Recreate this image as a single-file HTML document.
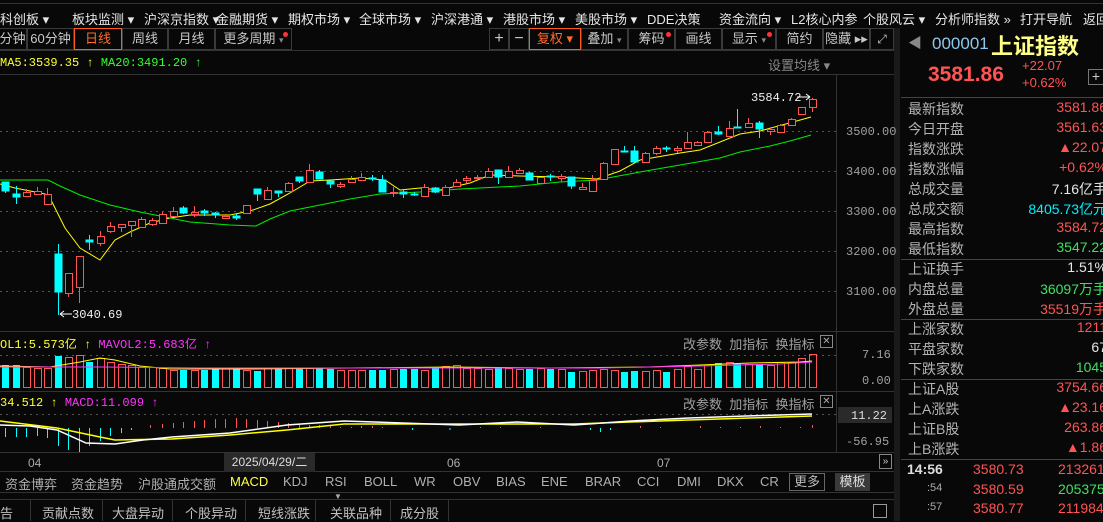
<!DOCTYPE html>
<html><head><meta charset="utf-8"><style>
*{margin:0;padding:0;box-sizing:border-box}
body{width:1103px;height:521px;background:#080808;overflow:hidden;position:relative;font-family:"Liberation Sans","Noto Sans CJK SC",sans-serif;color:#ccc}
.a{position:absolute;white-space:nowrap}
.menu{font-size:13px;color:#e6e6e6;top:9px}
.tab{position:absolute;top:28px;height:22px;border:1px solid #3a3a3a;font-size:13px;color:#c8c8c8;text-align:center;line-height:20px}
.mono{font-family:"Liberation Mono","DejaVu Sans Mono",monospace}
.rl{position:absolute;left:908px;font-size:14px;color:#b4b4b4;font-family:"Liberation Sans","Noto Sans CJK SC",sans-serif}
.rv{position:absolute;right:4px;font-size:14px;text-align:right;font-family:"Liberation Sans","Noto Sans CJK SC",sans-serif}
.red{color:#ff5454}.grn{color:#3ee060}.cy{color:#00f0ff}.wh{color:#e6e6e6}
.it{position:absolute;top:474px;font-size:13px;color:#b0b0b0}
.bt{position:absolute;top:503px;font-size:13px;color:#c0c0c0}
</style></head><body>
<div class="a" style="left:0;top:3px;width:1103px;height:1px;background:#333"></div>
<div class="a menu" style="left:0">科创板 ▾</div>
<div class="a menu" style="left:72px">板块监测 ▾</div>
<div class="a menu" style="left:144px">沪深京指数 ▾</div>
<div class="a menu" style="left:216px">金融期货 ▾</div>
<div class="a menu" style="left:288px">期权市场 ▾</div>
<div class="a menu" style="left:359px">全球市场 ▾</div>
<div class="a menu" style="left:431px">沪深港通 ▾</div>
<div class="a menu" style="left:503px">港股市场 ▾</div>
<div class="a menu" style="left:575px">美股市场 ▾</div>
<div class="a menu" style="left:647px">DDE决策</div>
<div class="a menu" style="left:719px">资金流向 ▾</div>
<div class="a menu" style="left:791px">L2核心内参</div>
<div class="a menu" style="left:863px">个股风云 ▾</div>
<div class="a menu" style="left:935px">分析师指数 »</div>
<div class="a menu" style="left:1020px">打开导航</div>
<div class="a menu" style="left:1083px">返回</div>

<div class="tab" style="left:-2px;width:29px">分钟</div>
<div class="tab" style="left:27px;width:47px">60分钟</div>
<div class="tab" style="left:74px;width:48px;border-color:#ff5a1e;color:#ff6a2a">日线</div>
<div class="tab" style="left:122px;width:46px">周线</div>
<div class="tab" style="left:168px;width:47px">月线</div>
<div class="tab" style="left:215px;width:77px">更多周期 <span style="font-size:9px;color:#888">▾</span><span style="position:absolute;right:3px;top:3px;width:5px;height:5px;border-radius:50%;background:#ff3333"></span></div>
<div class="tab" style="left:489px;width:20px;font-size:16px">+</div>
<div class="tab" style="left:509px;width:20px;font-size:16px">−</div>
<div class="tab" style="left:529px;width:52px;border-color:#ff5a1e;color:#ff6a2a">复权 ▾</div>
<div class="tab" style="left:581px;width:47px">叠加 <span style="font-size:9px;color:#888">▾</span></div>
<div class="tab" style="left:628px;width:47px">筹码<span style="position:absolute;right:3px;top:3px;width:5px;height:5px;border-radius:50%;background:#ff3333"></span></div>
<div class="tab" style="left:675px;width:47px">画线</div>
<div class="tab" style="left:722px;width:54px">显示 <span style="font-size:9px;color:#888">▾</span><span style="position:absolute;right:3px;top:3px;width:5px;height:5px;border-radius:50%;background:#ff3333"></span></div>
<div class="tab" style="left:776px;width:47px">简约</div>
<div class="tab" style="left:823px;width:47px">隐藏 ▸▸</div>
<div class="tab" style="left:870px;width:24px;font-size:12px">⤢</div>

<div class="a mono" style="left:0;top:56px;font-size:12px;color:#ffff33">MA5:3539.35 ↑ <span style="color:#33ff33">MA20:3491.20 ↑</span></div>
<div class="a" style="left:768px;top:55px;font-size:13px;color:#888">设置均线 ▾</div>

<svg class="a" style="left:0;top:0" width="900" height="521">
<g stroke="#555" stroke-dasharray="2,4" stroke-width="1">
<line x1="0" x2="836" y1="131.5" y2="131.5"/><line x1="0" x2="836" y1="171.5" y2="171.5"/><line x1="0" x2="836" y1="211.5" y2="211.5"/><line x1="0" x2="836" y1="251.5" y2="251.5"/><line x1="0" x2="836" y1="291.5" y2="291.5"/>
<line x1="0" x2="836" y1="355.5" y2="355.5"/><line x1="0" x2="836" y1="414.5" y2="414.5"/>
</g>
<g stroke="#333"><line x1="0" x2="900" y1="50.5" y2="50.5"/><line x1="0" x2="900" y1="74.5" y2="74.5"/><line x1="836.5" x2="836.5" y1="75" y2="452"/><line x1="0" x2="900" y1="331.5" y2="331.5"/><line x1="0" x2="900" y1="391.5" y2="391.5"/><line x1="0" x2="900" y1="452.5" y2="452.5"/><line x1="0" x2="900" y1="471.5" y2="471.5"/><line x1="0" x2="900" y1="492.5" y2="492.5"/><line x1="0" x2="900" y1="499.5" y2="499.5"/></g>
<rect x="894" y="28" width="7" height="493" fill="#1a1a1a"/>
<g fill="#a0a0a0" font-family="Liberation Mono,monospace" font-size="12">
<text x="846" y="135">3500.00</text><text x="846" y="175">3400.00</text><text x="846" y="215">3300.00</text><text x="846" y="255">3200.00</text><text x="846" y="295">3100.00</text>
<text x="862" y="358">7.16</text><text x="862" y="384">0.00</text>
<rect x="838" y="407" width="54" height="16" fill="#2a2a2a"/><text x="851" y="419" fill="#ddd">11.22</text><text x="846" y="445">-56.95</text>
</g>
<polyline fill="none" stroke="#ffff00" stroke-width="1" points="0,184 15,188 45,194 50,198 65,228 80,248 100,260 115,240 130,232 150,223 170,218 190,215 230,215 250,211 270,204 290,193 310,181 330,180 360,178 385,180 400,190 420,188 440,190 470,183 490,175 520,176 560,177 597,179 620,171 640,160 680,153 700,150 740,134 760,131 793,122 811,117"/>
<polyline fill="none" stroke="#00ee00" stroke-width="1" points="0,180 48,180 60,186 80,195 110,205 140,212 160,216 190,222 230,225 256,226 270,219 290,211 320,205 350,199 380,194 420,192 460,189 480,188 520,186 560,182 597,180 640,172 680,165 720,158 740,152 770,146 790,141 811,135"/>
<g stroke="#ff5454" fill="#080808" stroke-width="1">
<path d="M26.5 189V196M37.5 187V194M47.5 188V204M68.5 273V297M79.5 256V303M100.5 231V246M110.5 222V233M121.5 224V232M131.5 221V237M141.5 217V227M152.5 218V226M162.5 212V223M173.5 207V216M194.5 206V217M225.5 214V219M246.5 205V213M267.5 187V199M288.5 182V191M309.5 164V182M340.5 182V188M351.5 176V182M361.5 173V180M393.5 187V197M424.5 184V196M445.5 185V195M456.5 179V186M466.5 176V183M477.5 175V178M488.5 168V177M508.5 166V177M519.5 168V174M540.5 177V183M561.5 174V182M582.5 183V189M592.5 175V191M603.5 162V179M614.5 149V164M645.5 152V162M656.5 146V155M677.5 146V153M687.5 132V148M697.5 141V146M707.5 131V142M729.5 121V136M748.5 118V127M770.5 127V135M780.5 124V132M791.5 118V125M801.5 107V114M812.5 98V112"/>
<rect x="23.5" y="192.5" width="7" height="4"/><rect x="34.5" y="191.5" width="7" height="3"/><rect x="44.5" y="194.5" width="7" height="10"/><rect x="65.5" y="273.5" width="7" height="20"/><rect x="76.5" y="256.5" width="7" height="31"/><rect x="97.5" y="236.5" width="7" height="7"/><rect x="107.5" y="226.5" width="7" height="5"/><rect x="118.5" y="224.5" width="7" height="3"/><rect x="128.5" y="221.5" width="7" height="4"/><rect x="138.5" y="219.5" width="7" height="8"/><rect x="149.5" y="220.5" width="7" height="4"/><rect x="159.5" y="214.5" width="7" height="9"/><rect x="170.5" y="211.5" width="7" height="5"/><rect x="191.5" y="212.5" width="7" height="2"/><rect x="222.5" y="216.5" width="7" height="2"/><rect x="243.5" y="205.5" width="7" height="8"/><rect x="264.5" y="190.5" width="7" height="9"/><rect x="285.5" y="183.5" width="7" height="8"/><rect x="306.5" y="170.5" width="7" height="12"/><rect x="337.5" y="184.5" width="7" height="2"/><rect x="348.5" y="179.5" width="7" height="3"/><rect x="358.5" y="177.5" width="7" height="3"/><rect x="390.5" y="192.5" width="7" height="1"/><rect x="421.5" y="187.5" width="7" height="9"/><rect x="442.5" y="187.5" width="7" height="8"/><rect x="453.5" y="182.5" width="7" height="4"/><rect x="463.5" y="178.5" width="7" height="2"/><rect x="474.5" y="177.5" width="7" height="1"/><rect x="485.5" y="171.5" width="7" height="6"/><rect x="505.5" y="171.5" width="7" height="6"/><rect x="516.5" y="170.5" width="7" height="3"/><rect x="537.5" y="177.5" width="7" height="6"/><rect x="558.5" y="176.5" width="7" height="2"/><rect x="579.5" y="187.5" width="7" height="2"/><rect x="589.5" y="180.5" width="7" height="11"/><rect x="600.5" y="163.5" width="7" height="16"/><rect x="611.5" y="149.5" width="7" height="15"/><rect x="642.5" y="153.5" width="7" height="9"/><rect x="653.5" y="148.5" width="7" height="5"/><rect x="674.5" y="148.5" width="7" height="2"/><rect x="684.5" y="142.5" width="7" height="6"/><rect x="694.5" y="142.5" width="7" height="3"/><rect x="704.5" y="132.5" width="7" height="10"/><rect x="726.5" y="128.5" width="7" height="8"/><rect x="745.5" y="123.5" width="7" height="4"/><rect x="767.5" y="129.5" width="7" height="2"/><rect x="777.5" y="125.5" width="7" height="7"/><rect x="788.5" y="119.5" width="7" height="6"/><rect x="798.5" y="107.5" width="7" height="7"/><rect x="809.5" y="99.5" width="7" height="8"/>
</g>
<g stroke="#00ffff" fill="#00ffff">
<path d="M5.5 182V193M16.5 186V204M58.5 244V315M89.5 235V250M183.5 206V214M204.5 209V216M215.5 212V218M236.5 214V220M257.5 189V201M278.5 191V197M299.5 177V183M319.5 170V179M330.5 181V188M372.5 175V181M382.5 175V192M403.5 190V198M414.5 192V196M435.5 187V193M498.5 170V184M529.5 172V180M550.5 174V181M571.5 177V189M624.5 146V152M634.5 146V162M666.5 146V152M718.5 126V135M737.5 109V128M759.5 121V138"/>
<rect x="2" y="182" width="7" height="9"/><rect x="13" y="194" width="7" height="3"/><rect x="55" y="254" width="7" height="38"/><rect x="86" y="240" width="7" height="2"/><rect x="180" y="208" width="7" height="5"/><rect x="201" y="211" width="7" height="2"/><rect x="212" y="213" width="7" height="2"/><rect x="233" y="216" width="7" height="2"/><rect x="254" y="189" width="7" height="5"/><rect x="275" y="191" width="7" height="2"/><rect x="296" y="177" width="7" height="4"/><rect x="316" y="172" width="7" height="7"/><rect x="327" y="181" width="7" height="3"/><rect x="369" y="178" width="7" height="1"/><rect x="379" y="180" width="7" height="12"/><rect x="400" y="192" width="7" height="2"/><rect x="411" y="194" width="7" height="1"/><rect x="432" y="188" width="7" height="4"/><rect x="495" y="170" width="7" height="7"/><rect x="526" y="173" width="7" height="7"/><rect x="547" y="176" width="7" height="1"/><rect x="568" y="177" width="7" height="9"/><rect x="621" y="151" width="7" height="1"/><rect x="631" y="151" width="7" height="11"/><rect x="663" y="148" width="7" height="1"/><rect x="715" y="132" width="7" height="2"/><rect x="734" y="127" width="7" height="1"/><rect x="756" y="123" width="7" height="6"/>
</g>
<g fill="#f0f0f0" font-family="Liberation Mono,monospace" font-size="12">
<text x="72" y="318">3040.69</text><path d="M60 314H72M60 314l4-3M60 314l4 3" stroke="#fff" fill="none"/>
<text x="751" y="101">3584.72</text><path d="M797 97H810M810 97l-4-3M810 97l-4 3" stroke="#fff" fill="none"/>
</g>
<g stroke="#ff5454" fill="none">
<rect x="23.5" y="367.5" width="7" height="20"/><rect x="34.5" y="368.5" width="7" height="19"/><rect x="44.5" y="368.5" width="7" height="19"/><rect x="65.5" y="357.5" width="7" height="30"/><rect x="76.5" y="355.5" width="7" height="32"/><rect x="97.5" y="358.5" width="7" height="29"/><rect x="107.5" y="362.5" width="7" height="25"/><rect x="118.5" y="364.5" width="7" height="23"/><rect x="128.5" y="365.5" width="7" height="22"/><rect x="138.5" y="367.5" width="7" height="20"/><rect x="149.5" y="367.5" width="7" height="20"/><rect x="159.5" y="368.5" width="7" height="19"/><rect x="170.5" y="370.5" width="7" height="17"/><rect x="191.5" y="370.5" width="7" height="17"/><rect x="222.5" y="368.5" width="7" height="19"/><rect x="243.5" y="370.5" width="7" height="17"/><rect x="264.5" y="368.5" width="7" height="19"/><rect x="285.5" y="368.5" width="7" height="19"/><rect x="306.5" y="368.5" width="7" height="19"/><rect x="337.5" y="370.5" width="7" height="17"/><rect x="348.5" y="370.5" width="7" height="17"/><rect x="358.5" y="370.5" width="7" height="17"/><rect x="390.5" y="369.5" width="7" height="18"/><rect x="421.5" y="370.5" width="7" height="17"/><rect x="442.5" y="366.5" width="7" height="21"/><rect x="453.5" y="365.5" width="7" height="22"/><rect x="463.5" y="368.5" width="7" height="19"/><rect x="474.5" y="368.5" width="7" height="19"/><rect x="485.5" y="369.5" width="7" height="18"/><rect x="505.5" y="368.5" width="7" height="19"/><rect x="516.5" y="369.5" width="7" height="18"/><rect x="537.5" y="368.5" width="7" height="19"/><rect x="558.5" y="369.5" width="7" height="18"/><rect x="579.5" y="371.5" width="7" height="16"/><rect x="589.5" y="370.5" width="7" height="17"/><rect x="600.5" y="369.5" width="7" height="18"/><rect x="611.5" y="370.5" width="7" height="17"/><rect x="642.5" y="371.5" width="7" height="16"/><rect x="653.5" y="370.5" width="7" height="17"/><rect x="674.5" y="369.5" width="7" height="18"/><rect x="684.5" y="366.5" width="7" height="21"/><rect x="694.5" y="369.5" width="7" height="18"/><rect x="704.5" y="365.5" width="7" height="22"/><rect x="726.5" y="362.5" width="7" height="25"/><rect x="745.5" y="364.5" width="7" height="23"/><rect x="767.5" y="365.5" width="7" height="22"/><rect x="777.5" y="362.5" width="7" height="25"/><rect x="788.5" y="362.5" width="7" height="25"/><rect x="798.5" y="358.5" width="7" height="29"/><rect x="809.5" y="354.5" width="7" height="33"/>
</g>
<g fill="#00ffff">
<rect x="2" y="365" width="7" height="23"/><rect x="13" y="365" width="7" height="23"/><rect x="55" y="356" width="7" height="32"/><rect x="86" y="362" width="7" height="26"/><rect x="180" y="370" width="7" height="18"/><rect x="201" y="370" width="7" height="18"/><rect x="212" y="369" width="7" height="19"/><rect x="233" y="368" width="7" height="20"/><rect x="254" y="371" width="7" height="17"/><rect x="275" y="368" width="7" height="20"/><rect x="296" y="368" width="7" height="20"/><rect x="316" y="368" width="7" height="20"/><rect x="327" y="369" width="7" height="19"/><rect x="369" y="370" width="7" height="18"/><rect x="379" y="370" width="7" height="18"/><rect x="400" y="369" width="7" height="19"/><rect x="411" y="369" width="7" height="19"/><rect x="432" y="368" width="7" height="20"/><rect x="495" y="368" width="7" height="20"/><rect x="526" y="369" width="7" height="19"/><rect x="547" y="369" width="7" height="19"/><rect x="568" y="372" width="7" height="16"/><rect x="621" y="372" width="7" height="16"/><rect x="631" y="371" width="7" height="17"/><rect x="663" y="372" width="7" height="16"/><rect x="715" y="363" width="7" height="25"/><rect x="734" y="364" width="7" height="24"/><rect x="756" y="364" width="7" height="24"/>
</g>
<polyline fill="none" stroke="#ffff00" points="0,366 50,367 80,362 100,358 115,360 140,366 170,369 250,369 350,368 450,367 550,368 650,367 700,365 750,363 800,362 812,361"/>
<polyline fill="none" stroke="#ff33ff" points="0,367 100,367 200,368 300,368 450,368 600,368 700,366 780,364 812,362"/>
<g stroke="#00ffff"><path d="M5.5 428V437M16.5 428V437M26.5 428V437M37.5 428V436M47.5 428V438M58.5 428V446M68.5 428V450M79.5 428V452M89.5 428V446M100.5 428V441M110.5 428V436M121.5 428V433M131.5 428V430M412.5 428V430M590.5 428V430M600.5 428V432M610.5 428V430M450 428V430"/></g>
<g stroke="#ff5454"><path d="M150.5 428V425M162.5 428V424M173.5 428V423M183.5 428V422M194.5 428V421M204.5 428V420M215.5 428V419M225.5 428V419M236.5 428V418M246.5 428V419M257.5 428V420M267.5 428V421M278.5 428V422M288.5 428V423M299.5 428V424M309.5 428V425M319.5 428V425M330.5 428V426M340.5 428V427M351.5 428V427M361.5 428V426M372.5 428V426M382.5 428V427M480.5 428V427M500.5 428V427M540.5 428V427M640.5 428V426M660.5 428V427M700.5 428V426M720.5 428V427M740.5 428V427M760.5 428V426M780.5 428V427M800.5 428V427M812.5 428V425"/></g>
<polyline fill="none" stroke="#ffff00" stroke-width="1.5" points="0,421 57,428 100,437 115,440 172,439 230,435 287,430 344,424 400,424 459,424 520,424 574,424 630,422 689,420 750,418 812,416"/>
<polyline fill="none" stroke="#ffffff" stroke-width="1.5" points="0,425 30,426 57,430 86,443 115,444 143,440 172,437 230,433 287,425 344,421 402,423 459,425 517,422 574,425 631,421 689,418 746,416 812,414"/>
</svg>

<div class="a mono" style="left:0;top:335px;font-size:12px;color:#ffff33">OL1:5.573亿 ↑ <span style="color:#ff33ff">MAVOL2:5.683亿 ↑</span></div>
<div class="a mono" style="left:0;top:396px;font-size:12px;color:#ffff33">34.512 ↑ <span style="color:#ff33ff">MACD:11.099 ↑</span></div>
<div class="a" style="left:683px;top:334px;font-size:13px;color:#a0a0a0">改参数 &nbsp;加指标 &nbsp;换指标</div>
<div class="a" style="left:820px;top:335px;width:13px;height:13px;border:1px solid #888;font-size:10px;line-height:11px;text-align:center;color:#aaa">✕</div>
<div class="a" style="left:683px;top:394px;font-size:13px;color:#a0a0a0">改参数 &nbsp;加指标 &nbsp;换指标</div>
<div class="a" style="left:820px;top:395px;width:13px;height:13px;border:1px solid #888;font-size:10px;line-height:11px;text-align:center;color:#aaa">✕</div>

<div class="a" style="left:28px;top:456px;font-size:12px;color:#aaa">04</div>
<div class="a" style="left:224px;top:453px;width:91px;height:19px;background:#2a2a2a;font-size:12px;color:#ddd;line-height:19px;text-align:center">2025/04/29/二</div>
<div class="a" style="left:447px;top:456px;font-size:12px;color:#aaa">06</div>
<div class="a" style="left:657px;top:456px;font-size:12px;color:#aaa">07</div>
<div class="a" style="left:879px;top:454px;width:13px;height:15px;border:1px solid #888;font-size:10px;color:#ccc;line-height:13px;text-align:center">»</div>

<div class="it" style="left:5px">资金博弈</div><div class="it" style="left:71px">资金趋势</div><div class="it" style="left:138px">沪股通成交额</div>
<div class="it" style="left:230px;color:#ffff44">MACD</div><div class="it" style="left:283px">KDJ</div><div class="it" style="left:325px">RSI</div><div class="it" style="left:364px">BOLL</div><div class="it" style="left:414px">WR</div><div class="it" style="left:453px">OBV</div><div class="it" style="left:496px">BIAS</div><div class="it" style="left:541px">ENE</div><div class="it" style="left:585px">BRAR</div><div class="it" style="left:637px">CCI</div><div class="it" style="left:677px">DMI</div><div class="it" style="left:717px">DKX</div><div class="it" style="left:760px">CR</div>
<div class="a" style="left:789px;top:473px;width:36px;height:18px;border:1px solid #666;font-size:13px;color:#bbb;text-align:center;line-height:16px">更多</div>
<div class="a" style="left:835px;top:473px;width:35px;height:18px;background:#3a3a3a;font-size:13px;color:#ddd;text-align:center;line-height:18px">模板</div>
<div class="a" style="left:334px;top:492px;font-size:8px;color:#aaa">▼</div>

<div class="bt" style="left:0">告</div><div class="bt" style="left:42px">贡献点数</div><div class="bt" style="left:112px">大盘异动</div><div class="bt" style="left:185px">个股异动</div><div class="bt" style="left:258px">短线涨跌</div><div class="bt" style="left:330px">关联品种</div><div class="bt" style="left:400px">成分股</div>
<div class="a" style="left:30px;top:500px;width:1px;height:21px;background:#333"></div><div class="a" style="left:102px;top:500px;width:1px;height:21px;background:#333"></div><div class="a" style="left:172px;top:500px;width:1px;height:21px;background:#333"></div><div class="a" style="left:245px;top:500px;width:1px;height:21px;background:#333"></div><div class="a" style="left:315px;top:500px;width:1px;height:21px;background:#333"></div><div class="a" style="left:390px;top:500px;width:1px;height:21px;background:#333"></div><div class="a" style="left:448px;top:500px;width:1px;height:21px;background:#333"></div>
<div class="a" style="left:873px;top:504px;width:14px;height:14px;border:1px solid #999"></div>

<div class="a" style="left:908px;top:33px;font-size:14px;color:#888">◀</div>
<div class="a" style="left:932px;top:34px;font-size:17px;color:#8cc8f0">000001</div>
<div class="a" style="left:991px;top:29px;font-size:22px;color:#ffff88;font-weight:bold">上证指数</div>
<div class="a" style="left:928px;top:63px;font-size:21px;color:#ff5454;font-weight:bold">3581.86</div>
<div class="a" style="left:1022px;top:58px;font-size:13px;color:#ff5454">+22.07</div>
<div class="a" style="left:1022px;top:75px;font-size:13px;color:#ff5454">+0.62%</div>
<div class="a" style="left:1088px;top:69px;width:16px;height:16px;border:1px solid #777;color:#ccc;font-size:14px;line-height:13px;text-align:center">+</div>
<div class="a" style="left:901px;top:97px;width:202px;height:1px;background:#444"></div>
<div class="a" style="left:901px;top:259px;width:202px;height:1px;background:#444"></div>
<div class="a" style="left:901px;top:319px;width:202px;height:1px;background:#444"></div>
<div class="a" style="left:901px;top:379px;width:202px;height:1px;background:#444"></div>
<div class="a" style="left:901px;top:459px;width:202px;height:1px;background:#444"></div>
<div style="position:absolute;left:0;top:0;width:1111px;height:521px">
<div class="rl" style="top:99px">最新指数</div><div class="rv red" style="top:99px">3581.86</div>
<div class="rl" style="top:119px">今日开盘</div><div class="rv red" style="top:119px">3561.63</div>
<div class="rl" style="top:139px">指数涨跌</div><div class="rv red" style="top:139px">▲22.07</div>
<div class="rl" style="top:159px">指数涨幅</div><div class="rv red" style="top:159px">+0.62%</div>
<div class="rl" style="top:179px">总成交量</div><div class="rv wh" style="top:179px">7.16亿手</div>
<div class="rl" style="top:199px">总成交额</div><div class="rv cy" style="top:199px">8405.73亿元</div>
<div class="rl" style="top:219px">最高指数</div><div class="rv red" style="top:219px">3584.72</div>
<div class="rl" style="top:239px">最低指数</div><div class="rv grn" style="top:239px">3547.22</div>
<div class="rl" style="top:259px">上证换手</div><div class="rv wh" style="top:259px">1.51%</div>
<div class="rl" style="top:279px">内盘总量</div><div class="rv grn" style="top:279px">36097万手</div>
<div class="rl" style="top:299px">外盘总量</div><div class="rv red" style="top:299px">35519万手</div>
<div class="rl" style="top:319px">上涨家数</div><div class="rv red" style="top:319px">1211</div>
<div class="rl" style="top:339px">平盘家数</div><div class="rv wh" style="top:339px">67</div>
<div class="rl" style="top:359px">下跌家数</div><div class="rv grn" style="top:359px">1045</div>
<div class="rl" style="top:379px">上证A股</div><div class="rv red" style="top:379px">3754.66</div>
<div class="rl" style="top:399px">上A涨跌</div><div class="rv red" style="top:399px">▲23.16</div>
<div class="rl" style="top:419px">上证B股</div><div class="rv red" style="top:419px">263.86</div>
<div class="rl" style="top:439px">上B涨跌</div><div class="rv red" style="top:439px">▲1.86</div>
</div>
<div class="a" style="left:907px;top:461px;font-size:14px;color:#ddd;font-weight:bold">14:56</div>
<div class="a" style="left:927px;top:482px;font-size:11px;color:#aaa">:54</div>
<div class="a" style="left:927px;top:501px;font-size:11px;color:#aaa">:57</div>
<div class="a red" style="left:973px;top:461px;font-size:14px">3580.73</div>
<div class="a red" style="left:973px;top:481px;font-size:14px">3580.59</div>
<div class="a red" style="left:973px;top:500px;font-size:14px">3580.77</div>
<div class="a red" style="left:1058px;top:461px;font-size:14px">213261</div>
<div class="a grn" style="left:1058px;top:481px;font-size:14px">205375</div>
<div class="a red" style="left:1058px;top:500px;font-size:14px">211984</div>
</body></html>
